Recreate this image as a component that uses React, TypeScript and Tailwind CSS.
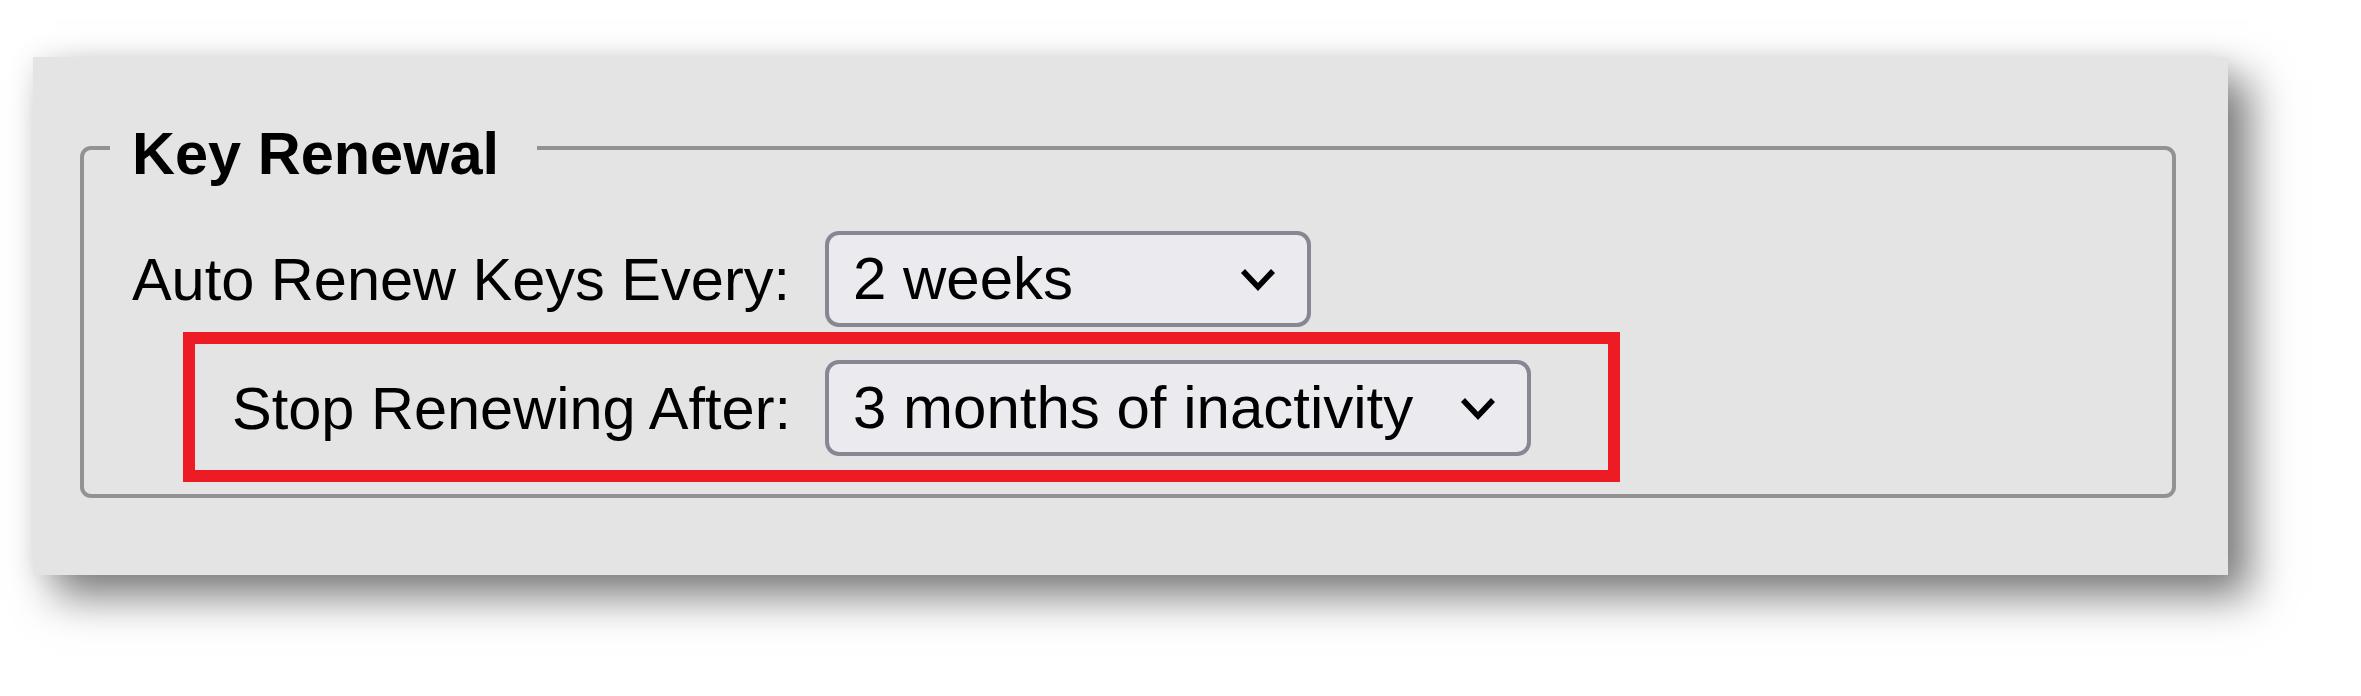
import React from "react";

const Chevron = () => (
  <svg width="36" height="25" viewBox="0 0 36 25" fill="none" stroke="#000" strokeWidth="5.5" strokeLinecap="butt" strokeLinejoin="miter">
    <path d="M3 4 L18 20 L33 4" />
  </svg>
);

function Dropdown({ value, className }: { value: string; className: string }) {
  return (
    <div
      className={`h-[96px] flex items-center justify-between pl-[24px] pr-[31px] border-[4px] border-[#878793] rounded-[14px] bg-[#ebebef] text-[60px] text-black ${className}`}
    >
      <span className="leading-none">{value}</span>
      <Chevron />
    </div>
  );
}

export default function App() {
  return (
    <div className="min-h-[696px] bg-white pt-[57px] pl-[33px] font-['Liberation_Sans',Arial,sans-serif] text-black">
      {/* panel */}
      <div className="w-[2195px] h-[518px] bg-[#e4e4e4] pt-[40px] pl-[47px] pr-[52px] shadow-[22px_22px_40px_rgba(0,0,0,0.5),0_0_24px_rgba(0,0,0,0.08)]">
        <fieldset className="border-[4px] border-[#929292] rounded-[11px] pl-[26px] pb-[12px]">
          <legend className="pt-[12px] pl-[22px] pr-[38px] text-[59.5px] font-bold">Key Renewal</legend>

          {/* row 1 */}
          <div className="mt-[33px] flex items-center gap-[35px]">
            <span className="ml-[21px] w-[659px] text-right text-[59.5px] whitespace-nowrap">Auto Renew Keys Every:</span>
            <Dropdown value="2 weeks" className="w-[486px]" />
          </div>

          {/* row 2 — highlighted */}
          <div className="mt-[5px] ml-[73px] w-fit flex items-center gap-[34px] border-[12px] border-[#ed1c24] pl-[33px] pr-[77px] pt-[16px] pb-[14px]">
            <span className="w-[563px] text-right text-[59.5px] whitespace-nowrap">Stop Renewing After:</span>
            <Dropdown value="3 months of inactivity" className="w-[706px]" />
          </div>
        </fieldset>
      </div>
    </div>
  );
}
